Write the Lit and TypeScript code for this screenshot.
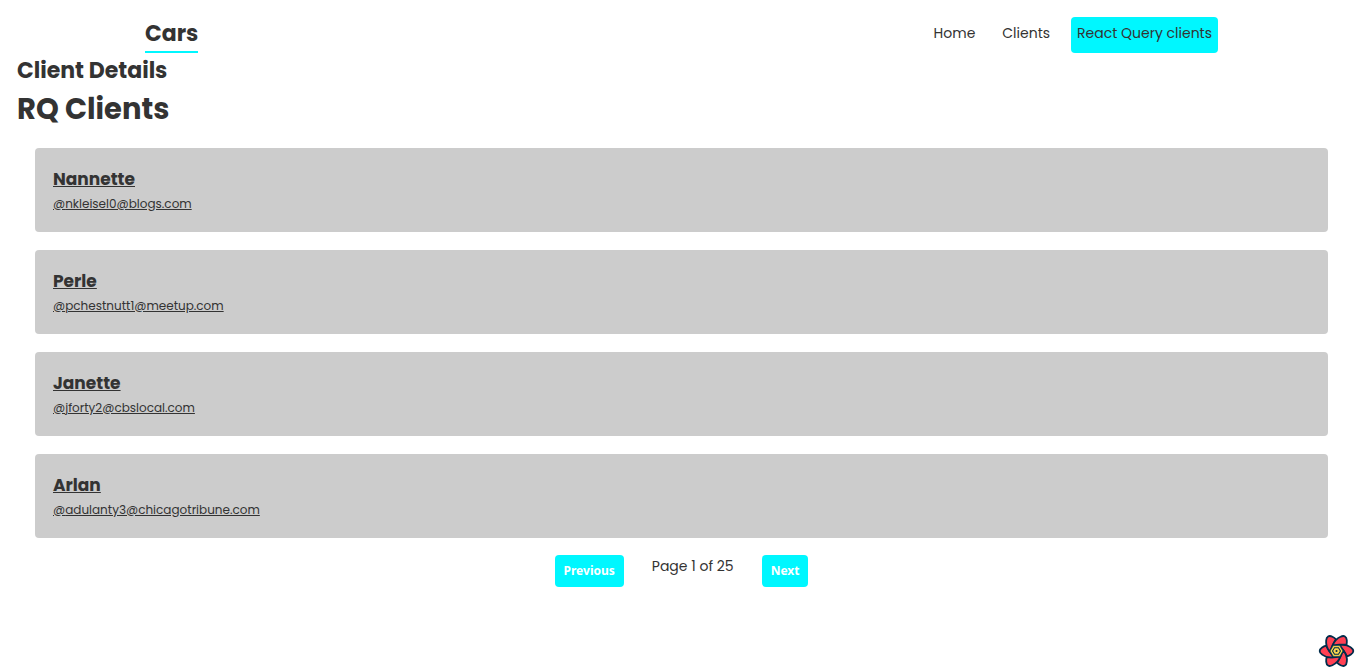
import { LitElement, html, svg, css } from "lit";
import { customElement, property, state } from "lit/decorators.js";

interface Client {
  name: string;
  email: string;
}

const CLIENTS: Client[] = [
  { name: "Nannette", email: "nkleisel0@blogs.com" },
  { name: "Perle", email: "pchestnutt1@meetup.com" },
  { name: "Janette", email: "jforty2@cbslocal.com" },
  { name: "Arlan", email: "adulanty3@chicagotribune.com" },
];

@customElement("client-card")
export class ClientCard extends LitElement {
  @property({ attribute: false }) client!: Client;

  static styles = css`
    :host {
      display: block;
    }
    .card {
      display: block;
      padding: 18px;
      border-radius: 4px;
      background: #ccc;
      color: #333;
    }
    .name {
      margin: 0 0 2px;
      font-size: 17px;
      line-height: 26px;
      font-weight: 700;
    }
    .email {
      margin: 0;
      font-size: 12px;
      line-height: 20px;
    }
  `;

  render() {
    return html`<a class="card" href="#client">
      <h3 class="name">${this.client.name}</h3>
      <p class="email">@${this.client.email}</p>
    </a>`;
  }
}

@customElement("app-root")
export class AppRoot extends LitElement {
  @state() private page = 1;
  private readonly pages = 25;

  static styles = css`
    :host {
      display: block;
      padding: 17px;
      color: #333;
      font-family: Poppins, Inter, sans-serif;
      font-size: 14px;
      line-height: 22px;
    }
    .header {
      display: flex;
      justify-content: space-between;
      padding: 0 128px;
    }
    .logo {
      border-bottom: 2px solid #00f7ff;
      color: inherit;
      font-size: 22px;
      line-height: 34px;
      font-weight: 700;
      text-decoration: none;
    }
    .nav {
      display: flex;
      gap: 15px;
    }
    .link {
      padding: 5px 6px;
      border-radius: 4px;
      color: inherit;
      text-decoration: none;
    }
    .active {
      background: #00f7ff;
    }
    .details {
      margin: 0;
      font-size: 22px;
      line-height: 36px;
    }
    .title {
      margin: 0;
      font-size: 29px;
      line-height: 41px;
    }
    .list {
      display: grid;
      gap: 18px;
      padding: 18px 18px 17px;
    }
    .pager {
      display: flex;
      justify-content: center;
      align-items: flex-start;
      gap: 28px;
    }
    .btn {
      padding: 8px 9px;
      border: 0;
      border-radius: 4px;
      background: #00f7ff;
      color: #fff;
      font: 700 12px/16px "Noto Sans", sans-serif;
      cursor: pointer;
    }
    .devtools {
      position: fixed;
      right: 8px;
      bottom: 3px;
      padding: 0;
      border: 0;
      background: none;
      line-height: 0;
      cursor: pointer;
    }
    .mark {
      width: 37px;
      height: 36px;
    }
  `;

  private mark() {
    return html`<svg class="mark" viewBox="-51 -50 102 100" aria-hidden="true">
      <g fill="#ff4154" stroke="#002c4b" stroke-width="5" stroke-linejoin="round">
        ${[0, 60, 120, 180, 240, 300].map(
          (a) => svg`<path transform=${`rotate(${a})`}
            d="M8 -17 C20 -19 32 -16 40 -10 C49 -4 49 4 40 10 C37 12 33 14 29 15 L19 -2 Z"/>`
        )}
      </g>
      <path d="M-18 0 L-9 -15 H9 L18 0 L9 15 H-9 Z" fill="#ffd94c" stroke="#002c4b" stroke-width="2"/>
      <path d="M-11 0 L-5.5 -9 H5.5 L11 0 L5.5 9 H-5.5 Z" fill="none" stroke="#002c4b" stroke-width="3"/>
      <circle r="3" fill="#002c4b"/>
    </svg>`;
  }

  render() {
    return html`
      <header class="header">
        <a class="logo" href="#home">Cars</a>
        <nav class="nav">
          <a class="link" href="#home">Home</a>
          <a class="link" href="#clients">Clients</a>
          <a class="link active" href="#rq-clients">React Query clients</a>
        </nav>
      </header>
      <main>
        <h2 class="details">Client Details</h2>
        <h1 class="title">RQ Clients</h1>
        <div class="list">
          ${CLIENTS.map((c) => html`<client-card .client=${c}></client-card>`)}
        </div>
        <div class="pager">
          <button class="btn" @click=${() => (this.page = Math.max(1, this.page - 1))}>Previous</button>
          <span>Page ${this.page} of ${this.pages}</span>
          <button class="btn" @click=${() => (this.page = Math.min(this.pages, this.page + 1))}>Next</button>
        </div>
      </main>
      <button class="devtools" aria-label="Open React Query Devtools">${this.mark()}</button>
    `;
  }
}
